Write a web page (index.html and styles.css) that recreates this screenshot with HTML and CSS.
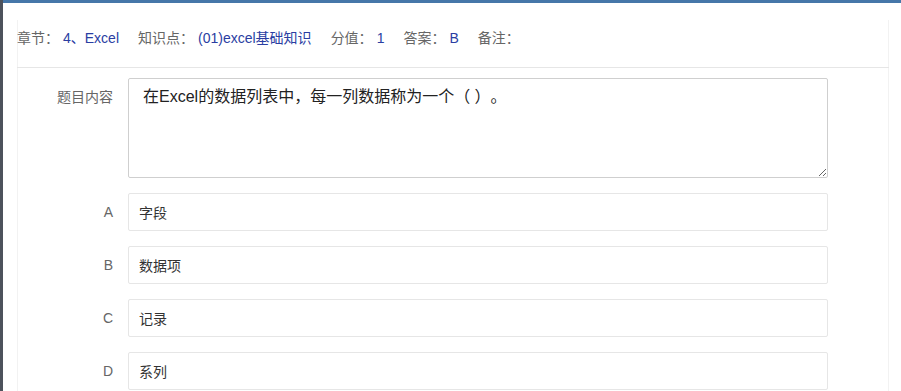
FILE: index.html
```html
<!DOCTYPE html>
<html lang="zh-CN">
<head>
<meta charset="utf-8">
<title>题目详情</title>
<link rel="stylesheet" href="styles.css">
</head>
<body>
<div class="screen">
  <div class="backdrop"></div>
  <div class="modal">
    <div class="modal-bar"></div>
    <div class="modal-body">
      <div class="panel">
        <div class="panel-head"><span class="meta-label">章节：</span><span class="meta-value">4、Excel</span><span class="meta-label">知识点：</span><span class="meta-value">(01)excel基础知识</span><span class="meta-label">分值：</span><span class="meta-value">1</span><span class="meta-label">答案：</span><span class="meta-value">B</span><span class="meta-label">备注：</span></div>
        <form class="form">
          <div class="form-item">
            <label class="form-label">题目内容</label>
            <div class="form-block">
              <textarea class="form-textarea" readonly>在Excel的数据列表中，每一列数据称为一个（ ）。</textarea>
            </div>
          </div>
          <div class="form-item">
            <label class="form-label">A</label>
            <div class="form-block"><input class="form-input" type="text" value="字段" readonly></div>
          </div>
          <div class="form-item">
            <label class="form-label">B</label>
            <div class="form-block"><input class="form-input" type="text" value="数据项" readonly></div>
          </div>
          <div class="form-item">
            <label class="form-label">C</label>
            <div class="form-block"><input class="form-input" type="text" value="记录" readonly></div>
          </div>
          <div class="form-item">
            <label class="form-label">D</label>
            <div class="form-block"><input class="form-input" type="text" value="系列" readonly></div>
          </div>
        </form>
      </div>
    </div>
  </div>
</div>
</body>
</html>
```

FILE: styles.css
```css
* { box-sizing: border-box; }
html, body {
  margin: 0;
  padding: 0;
  background: #fff;
  height: 391px;
  overflow: hidden;
}
body {
  font-family: "Liberation Sans", "Noto Sans CJK SC", sans-serif;
  font-size: 14px;
  color: #333;
  text-spacing-trim: space-all;
}
.screen {
  display: flex;
  height: 391px;
}
.backdrop {
  width: 3px;
  flex: none;
  background: #4d525c;
}
.modal {
  flex: 1;
  display: flex;
  flex-direction: column;
  background: #fff;
}
.modal-bar {
  height: 3px;
  flex: none;
  background: #4677a9;
}
.modal-body {
  flex: 1;
  padding: 17px 12px 0 14px;
}
.panel {
  height: 100%;
  border-left: 1px solid #f2f2f2;
  border-right: 1px solid #f2f2f2;
}
.panel-head {
  padding: 8px 0 19px 0;
  margin-left: -1px;
  margin-right: -1px;
  line-height: 20px;
  border-bottom: 1px solid #e6e6e6;
  white-space: nowrap;
}
.meta-label {
  color: #666;
  margin-right: 4px;
}
.meta-value {
  color: #2a3ea2;
  margin-right: 19px;
}
.form {
  padding-top: 10px;
  margin-right: 60px;
}
.form-item {
  display: flex;
  margin-bottom: 15px;
}
.form-label {
  width: 110px;
  flex: none;
  padding: 9px 15px;
  line-height: 20px;
  text-align: right;
  color: #666;
}
.form-block {
  flex: 1;
}
.form-textarea {
  display: block;
  width: 100%;
  height: 100px;
  padding: 8px 14px;
  border: 1px solid #cfcfcf;
  border-radius: 2px;
  font-family: "Liberation Sans", "Noto Sans CJK SC", sans-serif;
  font-size: 16px;
  line-height: 20px;
  color: #222;
  background: #fff;
  outline: none;
  text-spacing-trim: space-all;
}
.form-input {
  display: block;
  width: 100%;
  height: 38px;
  padding: 0 10px;
  border: 1px solid #e6e6e6;
  border-radius: 2px;
  font-family: "Liberation Sans", "Noto Sans CJK SC", sans-serif;
  font-size: 14px;
  line-height: 36px;
  color: #333;
  background: #fff;
  outline: none;
}
```
